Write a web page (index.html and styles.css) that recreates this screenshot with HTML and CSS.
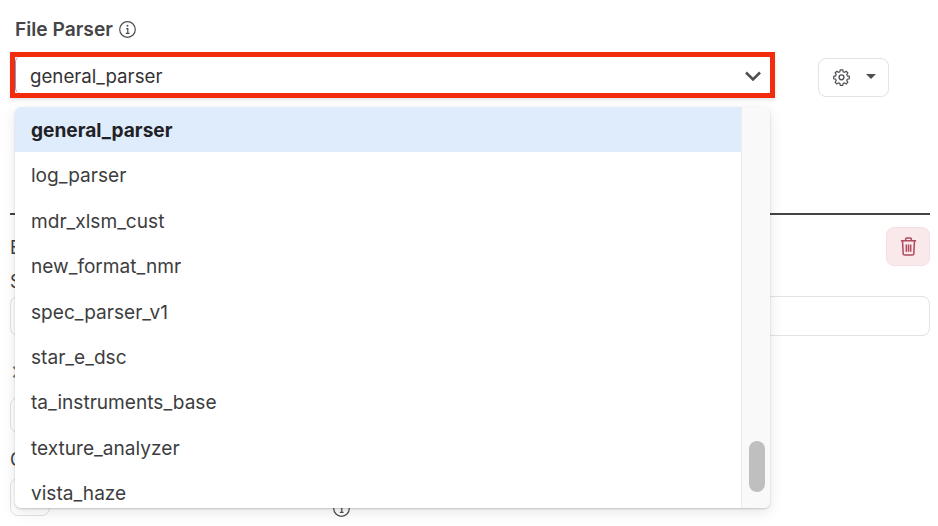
FILE: index.html
```html
<!DOCTYPE html>
<html lang="en">
<head>
    <meta charset="UTF-8">
    <meta name="viewport" content="width=device-width, initial-scale=1.0">
    <title>File Parser</title>
    <link rel="stylesheet" href="styles.css">
</head>
<body>
    <div class="container">
        <div class="field_label">
            <span>File Parser</span>
            <svg class="info_icon" viewBox="0 0 20 20"><circle cx="10" cy="10" r="8.2"/><path d="M8.6 9h1.7v5M8.2 14h4"/><circle class="dot" cx="10" cy="6.1" r="1"/></svg>
        </div>

        <div class="select_row">
            <div class="highlight">
                <div class="select_box">
                    <span>general_parser</span>
                    <svg class="chevron" viewBox="0 0 18 12"><path d="M2 2.5l7 7 7-7"/></svg>
                </div>
            </div>
            <button class="gear_button" type="button">
                <svg class="gear" viewBox="0 0 24 24"><path d="M10.3 2.6h3.4l.6 2.7 1.9.8 2.4-1.5 2.3 2.4-1.5 2.4.8 1.8 2.7.6v3.4l-2.7.6-.8 1.9 1.5 2.4-2.3 2.3-2.4-1.5-1.9.8-.6 2.7h-3.4l-.6-2.7-1.9-.8-2.4 1.5-2.3-2.3 1.5-2.4-.8-1.9-2.7-.6v-3.4l2.7-.6.8-1.8-1.5-2.4 2.3-2.4 2.4 1.5 1.9-.8z" transform="translate(1.2 1.2) scale(.9)"/><circle cx="12" cy="13" r="3.1"/></svg>
                <span class="caret"></span>
            </button>
        </div>

        <div class="section">
            <div class="section_head">
                <span class="side_text">E</span>
                <button class="delete_button" type="button">
                    <svg class="trash" viewBox="0 0 20 22"><path d="M2 5h16M7 5V3.2C7 2.5 7.5 2 8.2 2h3.600c.7 0 1.200.5 1.200 1.200V5M3.700 5l.7 13.500c0 1 .7 1.500 1.500 1.500h8.200c.8 0 1.500-.5 1.500-1.500L16.300 5M7.700 9v7.500M10 9v7.500M12.300 9v7.500"/></svg>
                </button>
            </div>
            <div class="side_text sheet_label">S</div>
            <div class="text_input"></div>
            <div class="side_text close_mark">×</div>
            <div class="text_input short_input"></div>
            <div class="side_text column_label">C</div>
            <div class="last_row">
                <div class="text_input tiny_input"></div>
                <svg class="info_icon lower_info" viewBox="0 0 20 20"><circle cx="10" cy="10" r="8.2"/><path d="M8.6 9h1.7v5M8.2 14h4"/><circle class="dot" cx="10" cy="6.1" r="1"/></svg>
            </div>
        </div>

        <div class="dropdown">
            <ul class="options">
                <li class="selected">general_parser</li>
                <li>log_parser</li>
                <li>mdr_xlsm_cust</li>
                <li>new_format_nmr</li>
                <li>spec_parser_v1</li>
                <li>star_e_dsc</li>
                <li>ta_instruments_base</li>
                <li>texture_analyzer</li>
                <li>vista_haze</li>
            </ul>
            <div class="scroll_track"><div class="scroll_thumb"></div></div>
        </div>
    </div>
</body>
</html>
```

FILE: styles.css
```css
* {
    box-sizing: border-box;
}
html, body {
    margin: 0;
    height: 100%;
    overflow: hidden;
}
body {
    font-family: Inter, "Liberation Sans", sans-serif;
    background-color: white;
    color: #3d3d40;
}
.container {
    position: relative;
    width: 938px;
    height: 526px;
    padding: 18px 8px 0 10px;
    overflow: hidden;
}
.field_label {
    display: flex;
    align-items: center;
    gap: 5px;
    height: 22px;
    margin-left: 5px;
    font-size: 19.2px;
    font-weight: 600;
    color: #454548;
}
.info_icon {
    width: 19px;
    height: 19px;
    fill: none;
    stroke: #4f4f52;
    stroke-width: 1.3;
}
.info_icon .dot {
    fill: #4f4f52;
    stroke: none;
}
.select_row {
    display: flex;
    align-items: center;
    margin-top: 12px;
}
.highlight {
    width: 765px;
    height: 46px;
    border: 5px solid #f22c0c;
    box-shadow: 0 2px 3px rgba(0, 0, 0, 0.1);
}
.select_box {
    display: flex;
    justify-content: space-between;
    align-items: center;
    height: 100%;
    padding: 2px 8px 0 14px;
    background-color: white;
    border-radius: 5px;
    border-left: 1px solid #7a9bd0;
    font-size: 18.7px;
    color: #333336;
}
.chevron {
    width: 18px;
    height: 12px;
    fill: none;
    stroke: #505054;
    stroke-width: 2.6;
}
.gear_button {
    display: flex;
    align-items: center;
    gap: 15px;
    width: 71px;
    height: 39px;
    margin-top: 4px;
    margin-left: 43px;
    padding: 0 0 1px 13px;
    background-color: white;
    border: 1px solid #e3e3e5;
    border-radius: 8px;
}
.gear {
    width: 19px;
    height: 19px;
    fill: none;
    stroke: #505054;
    stroke-width: 1.7;
}
.caret {
    width: 0;
    height: 0;
    border-left: 5px solid transparent;
    border-right: 5px solid transparent;
    border-top: 5px solid #505054;
}
.section {
    margin-top: 115px;
    border-top: 2px solid #444446;
}
.section_head {
    display: flex;
    justify-content: space-between;
    align-items: flex-start;
    height: 40px;
    padding-top: 12px;
}
.side_text {
    font-size: 18px;
    line-height: 22px;
}
.section_head .side_text {
    margin-top: 10px;
}
.delete_button {
    display: flex;
    justify-content: center;
    align-items: center;
    width: 44px;
    height: 39px;
    padding: 0;
    background-color: #f9e9eb;
    border: 1px solid #f3dfe2;
    border-radius: 8px;
}
.trash {
    width: 19px;
    height: 21px;
    fill: none;
    stroke: #b04a5e;
    stroke-width: 1.6;
}
.sheet_label {
    margin-top: 16px;
}
.text_input {
    height: 40px;
    margin-top: 3px;
    background-color: white;
    border: 1px solid #e3e3e5;
    border-radius: 8px;
}
.close_mark {
    margin-top: 23px;
    font-size: 26px;
    color: #77777a;
}
.short_input {
    width: 300px;
    height: 36px;
    margin-top: 16px;
}
.column_label {
    margin-top: 16px;
}
.last_row {
    display: flex;
    align-items: center;
}
.tiny_input {
    width: 40px;
    height: 38px;
    margin-top: 4px;
}
.lower_info {
    margin-left: 282px;
    margin-top: 28px;
}
.dropdown {
    position: absolute;
    top: 107px;
    left: 15px;
    display: flex;
    width: 755px;
    height: 401px;
    background-color: white;
    border-radius: 6px;
    box-shadow: 0 1px 2px rgba(0, 0, 0, 0.18), 0 4px 14px rgba(0, 0, 0, 0.1);
    overflow: hidden;
}
.options {
    flex: 1;
    margin: 0;
    padding: 0;
    list-style: none;
    font-size: 19.1px;
    color: #3d3d40;
}
.options li {
    height: 45.4px;
    padding-left: 16px;
    line-height: 47.4px;
}
.options .selected {
    background-color: #dfecfb;
    font-weight: 700;
    color: #1f2124;
}
.scroll_track {
    display: flex;
    align-items: flex-end;
    justify-content: center;
    width: 29px;
    padding: 0 0 16px 1px;
    background-color: #f9f9f9;
    border-left: 1px solid #ececec;
}
.scroll_thumb {
    width: 16px;
    height: 51px;
    background-color: #bfbfbf;
    border-radius: 8px;
}
```
